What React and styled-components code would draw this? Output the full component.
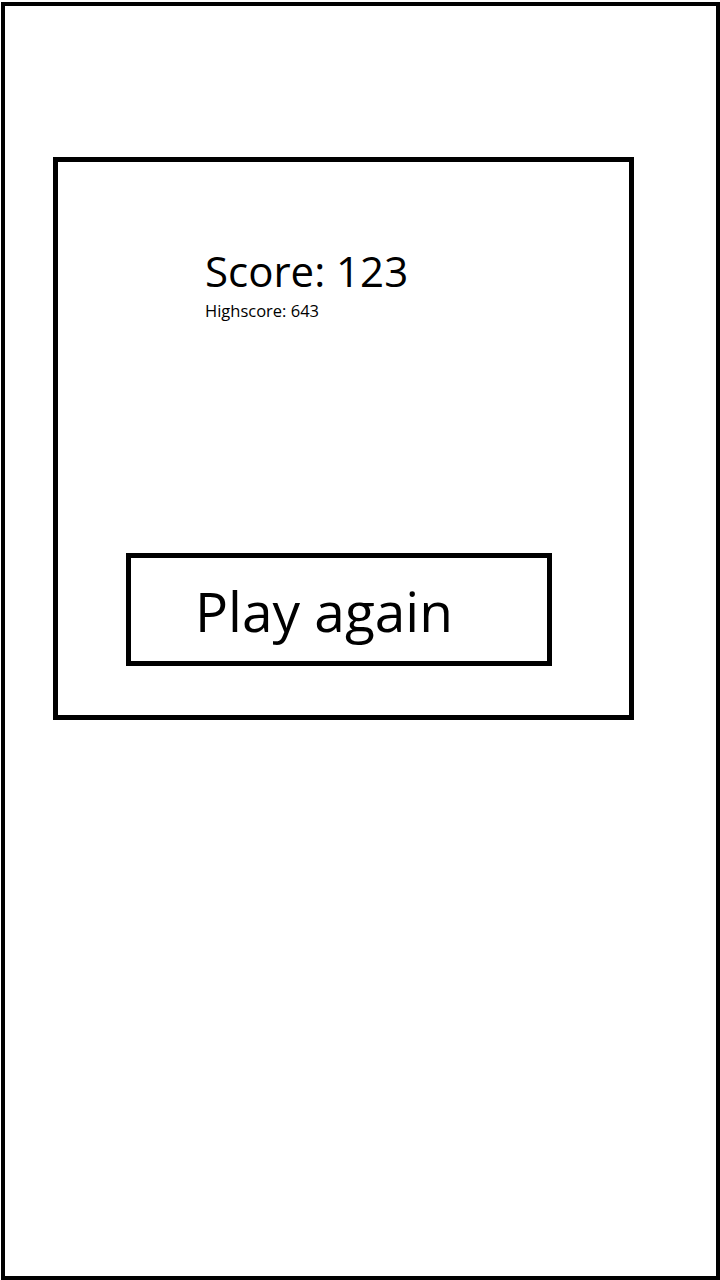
import React from 'react';
import styled, { createGlobalStyle } from 'styled-components';

const GlobalStyle = createGlobalStyle`
  html, body {
    margin: 0;
    padding: 0;
    background: #fff;
  }
  body {
    font-family: "Open Sans", "Noto Sans", sans-serif;
    color: #000;
  }
`;

const Screen = () => (
  <>
    <GlobalStyle />
    <Frame>
      <Card>
        <ScoreBlock>
          <Score>Score: 123</Score>
          <Highscore>Highscore: 643</Highscore>
        </ScoreBlock>
        <PlayButton type="button">Play again</PlayButton>
      </Card>
    </Frame>
  </>
);

const Frame = styled.div`
  box-sizing: border-box;
  width: 719px;
  height: 1278px;
  margin: 2px 0 0 1px;
  border: 4px solid #000;
  padding: 151px 0 0 48px;
`;

const Card = styled.div`
  box-sizing: border-box;
  width: 581px;
  height: 563px;
  border: 5px solid #000;
  display: flex;
  flex-direction: column;
`;

const ScoreBlock = styled.div`
  padding: 85px 0 0 147px;
  display: flex;
  flex-direction: column;
`;

const Score = styled.div`
  font-size: 42px;
  line-height: 48px;
`;

const Highscore = styled.div`
  font-size: 16.5px;
  line-height: 20px;
  margin-top: 6px;
`;

const PlayButton = styled.button`
  box-sizing: border-box;
  width: 426px;
  height: 113px;
  margin: 232px 0 0 68px;
  border: 5px solid #000;
  background: #fff;
  font-family: "Open Sans", "Noto Sans", sans-serif;
  font-size: 55px;
  color: #000;
  text-align: left;
  padding: 2px 0 0 64px;
  cursor: pointer;
`;

export default Screen;
